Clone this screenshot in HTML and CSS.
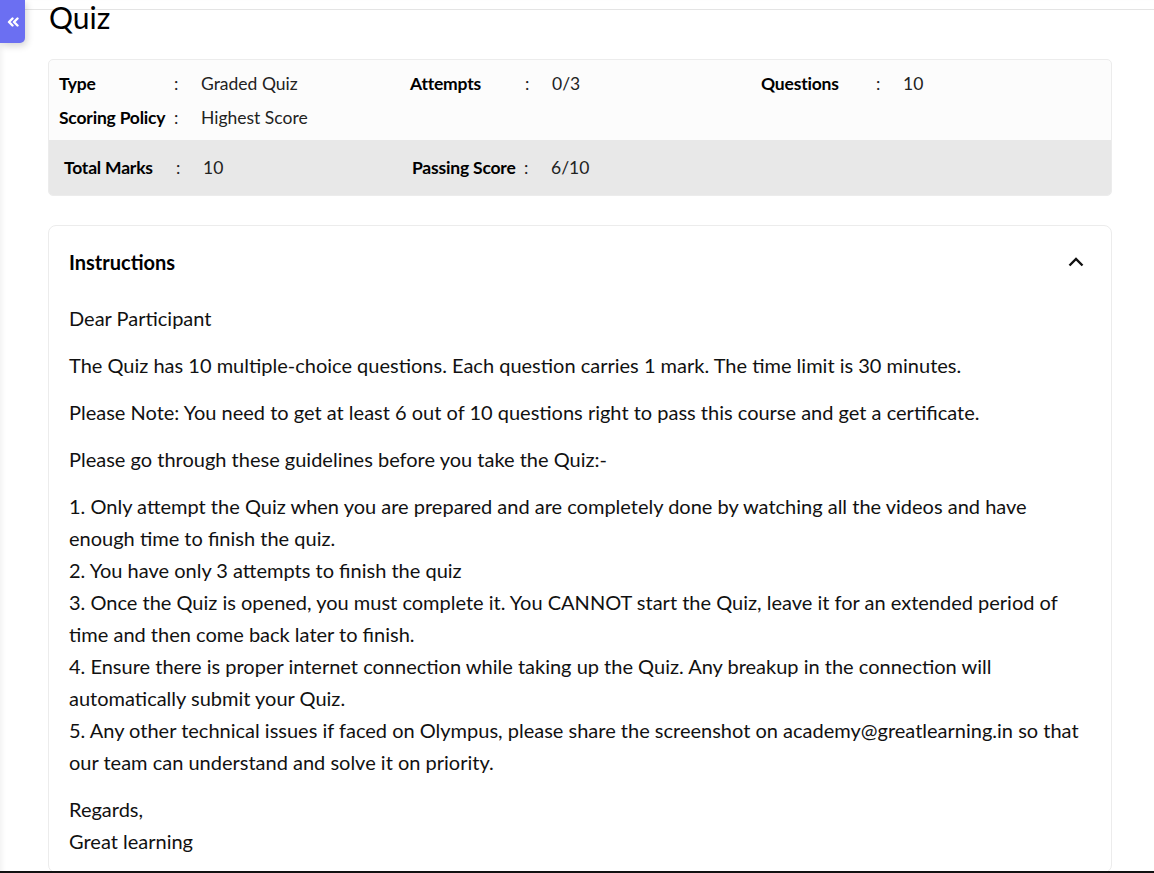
FILE: index.html
```html
<!DOCTYPE html>
<html lang="en">
<head>
<meta charset="utf-8">
<title>Quiz</title>
<link rel="stylesheet" href="styles.css">
</head>
<body>
<div class="screen">
  <div class="viewport">
    <button class="collapse" type="button" aria-label="Collapse">
      <svg width="12" height="10" viewBox="0 0 12 10"><polyline points="5.5,1.5 2,5 5.5,8.5" fill="none" stroke="#fff" stroke-width="2.4" stroke-linecap="round" stroke-linejoin="round"/><polyline points="10.5,1.5 7,5 10.5,8.5" fill="none" stroke="#fff" stroke-width="2.4" stroke-linecap="round" stroke-linejoin="round"/></svg>
    </button>
    <div class="topline"></div>
    <main class="content">
      <h1 class="title">Quiz</h1>

      <section class="info">
        <div class="info-top">
          <div class="field"><span class="label">Type</span><span class="colon">:</span><span class="value">Graded Quiz</span></div>
          <div class="field"><span class="label">Attempts</span><span class="colon">:</span><span class="value">0/3</span></div>
          <div class="field"><span class="label">Questions</span><span class="colon">:</span><span class="value">10</span></div>
          <div class="field"><span class="label">Scoring Policy</span><span class="colon">:</span><span class="value">Highest Score</span></div>
        </div>
        <div class="info-bottom">
          <div class="field"><span class="label">Total Marks</span><span class="colon">:</span><span class="value">10</span></div>
          <div class="field"><span class="label">Passing Score</span><span class="colon">:</span><span class="value">6/10</span></div>
        </div>
      </section>

      <section class="instructions">
        <div class="ins-head">
          <h2>Instructions</h2>
          <svg class="chev" width="16" height="10" viewBox="0 0 16 10"><polyline points="1.5,8.5 8,2 14.5,8.5" fill="none" stroke="#111" stroke-width="2.4" stroke-linejoin="miter"/></svg>
        </div>
        <div class="ins-body">
          <p>Dear Participant</p>
          <p>The Quiz has 10 multiple-choice questions. Each question carries 1 mark. The time limit is 30 minutes.</p>
          <p>Please Note: You need to get at least 6 out of 10 questions right to pass this course and get a certificate.</p>
          <p>Please go through these guidelines before you take the Quiz:-</p>
          <p>1. Only attempt the Quiz when you are prepared and are completely done by watching all the videos and have enough time to finish the quiz.<br>
          2. You have only 3 attempts to finish the quiz<br>
          3. Once the Quiz is opened, you must complete it. You CANNOT start the Quiz, leave it for an extended period of time and then come back later to finish.<br>
          4. Ensure there is proper internet connection while taking up the Quiz. Any breakup in the connection will automatically submit your Quiz.<br>
          5. Any other technical issues if faced on Olympus, please share the screenshot on academy@greatlearning.in so that our team can understand and solve it on priority.</p>
          <p>Regards,<br>Great learning</p>
        </div>
      </section>
    </main>
  </div>
  <div class="bottombar"></div>
</div>
</body>
</html>
```

FILE: styles.css
```css
* { box-sizing: border-box; }
html, body { margin: 0; padding: 0; }
body {
  font-family: "Lato", "Noto Sans", sans-serif;
  color: #111;
  background: #fff;
}
.screen {
  height: 100vh;
  display: flex;
  flex-direction: column;
  overflow: hidden;
}
.viewport {
  position: relative;
  flex: 1;
  overflow: hidden;
  box-shadow: inset 5px 0 5px -3px rgba(0,0,0,0.06);
}
.bottombar {
  height: 2px;
  background: #111;
  flex: none;
}
.topline {
  height: 10px;
  border-bottom: 1px solid #e4e4e4;
}
.collapse {
  position: absolute;
  left: 0;
  top: 0;
  width: 25px;
  height: 43px;
  border: 0;
  padding: 0;
  background: #6b6ff2;
  border-radius: 0 0 5px 0;
  box-shadow: 2px 3px 7px rgba(0,0,0,0.16);
  display: flex;
  align-items: flex-end;
  justify-content: center;
  padding-bottom: 16px;
  z-index: 2;
}
.content {
  padding: 0 42px 0 48px;
}
.title {
  margin: -8px 0 0 1px;
  font-size: 30px;
  font-weight: 400;
  line-height: 30px;
  color: #000;
}
.info {
  margin-top: 27px;
  border: 1px solid #ececec;
  border-radius: 5px;
  background: #fcfcfc;
  overflow: hidden;
}
.info-top {
  display: grid;
  grid-template-columns: 351px 351px 351px;
  padding: 6px 10px 6px;
}
.info-bottom {
  display: grid;
  grid-template-columns: 348px 348px;
  padding: 0 15px;
  height: 55px;
  align-items: center;
  background: #e8e8e8;
}
.field {
  display: flex;
  align-items: center;
  height: 34px;
  font-size: 17.5px;
}
.label {
  width: 115px;
  font-size: 17.5px;
  font-weight: 700;
  color: #000;
  letter-spacing: -0.2px;
}
.info-bottom .label { width: 112px; }
.colon {
  width: 27px;
  color: #222;
}
.value {
  color: #222;
}
.instructions {
  margin-top: 29px;
  border: 1px solid #ececec;
  border-radius: 8px;
  background: #fff;
}
.ins-head {
  display: flex;
  align-items: center;
  justify-content: space-between;
  padding: 0 27px 0 20px;
  height: 72px;
}
.ins-head h2 {
  margin: 0;
  font-size: 20px;
  font-weight: 700;
  color: #000;
}
.chev { display: block; }
.ins-body {
  padding: 4px 20px 0;
}
.ins-body p {
  margin: 0 0 15px;
  font-size: 20px;
  line-height: 32px;
  color: #111;
}
```
